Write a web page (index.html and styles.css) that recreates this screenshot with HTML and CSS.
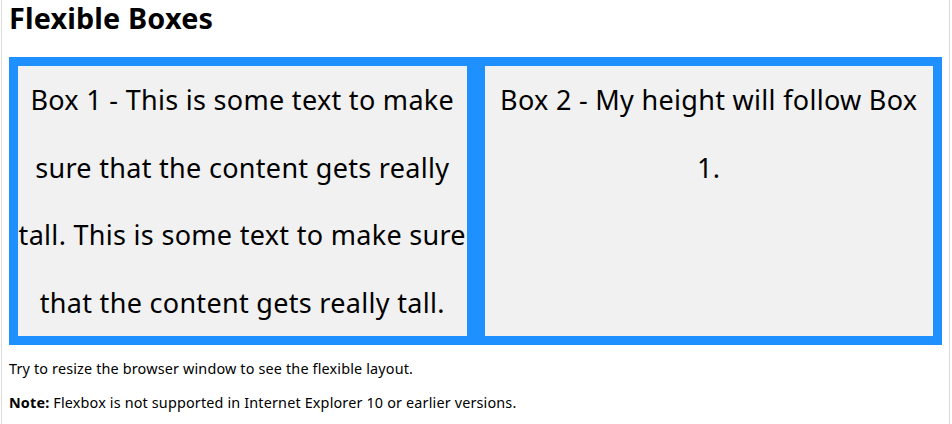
FILE: index.html
```html
<!DOCTYPE html>
<html>
<head>
<meta charset="utf-8">
<link rel="stylesheet" href="styles.css">
</head>
<body>
<div class="page">
  <h1 class="title">Flexible Boxes</h1>
  <div class="flex-container">
    <div class="box">Box 1 - This is some text to make sure that the content gets really tall. This is some text to make sure that the content gets really tall.</div>
    <div class="box">Box 2 - My height will follow Box<br>1.</div>
  </div>
  <p class="text">Try to resize the browser window to see the flexible layout.</p>
  <p class="text"><b>Note:</b> Flexbox is not supported in Internet Explorer 10 or earlier versions.</p>
</div>
</body>
</html>
```
FILE: styles.css
```css
html, body {
  margin: 0;
  padding: 0;
  background: #fff;
}
body {
  font-family: "Noto Sans", sans-serif;
  color: #000;
}
.page {
  margin-left: 1px;
  width: 949px;
  height: 424px;
  box-sizing: border-box;
  border-left: 1px solid #dcdcdc;
  border-right: 1px solid #dcdcdc;
  padding: 0 7px 0 7px;
  overflow: hidden;
}
.title {
  font-size: 28.8px;
  font-weight: bold;
  margin: 0;
  line-height: 36px;
  height: 57px;
  letter-spacing: 0.15px;
}
.flex-container {
  display: flex;
  background-color: #1e90ff;
}
.box {
  flex: 1 1 0;
  background-color: #f1f1f1;
  margin: 9px;
  font-size: 27px;
  line-height: 67.5px;
  text-align: center;
  letter-spacing: 0.3px;
}
.text {
  font-size: 14.4px;
  margin: 14px 0;
  line-height: 20px;
  letter-spacing: 0.16px;
}
```
